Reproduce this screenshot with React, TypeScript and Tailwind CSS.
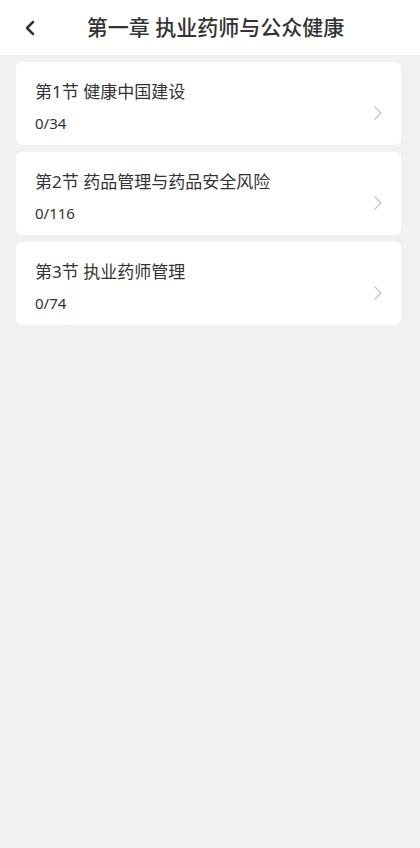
import React from 'react';
import { ChevronLeft, ChevronRight } from 'lucide-react';

const sections = [
  { id: 1, title: '第1节 健康中国建设', done: 0, total: 34 },
  { id: 2, title: '第2节 药品管理与药品安全风险', done: 0, total: 116 },
  { id: 3, title: '第3节 执业药师管理', done: 0, total: 74 },
];

export default function App() {
  return (
    <div
      className="min-h-screen bg-[#f1f1f1]"
      style={{ fontFamily: '"Noto Sans", "Noto Sans CJK SC", sans-serif' }}
    >
      <div className="relative flex h-[55px] items-center justify-center bg-white pl-[11px]">
        <ChevronLeft className="absolute left-[18px] h-6 w-6 text-[#333]" strokeWidth={2.5} />
        <h1 className="text-[21px] font-medium text-[#333]">第一章 执业药师与公众健康</h1>
      </div>

      <div className="flex flex-col gap-[7px] pl-4 pr-[19px] pt-[7px]">
        {sections.map((s) => (
          <div key={s.id} className="flex h-[83px] items-center rounded-md bg-white pl-[19px] pr-[11px]">
            <div className="flex-1 pt-[7px]">
              <p className="text-[17px] leading-[22px] text-[#333]">{s.title}</p>
              <p className="mt-[10px] text-[15px] leading-[20px] text-[#333]">
                {s.done}/{s.total}
              </p>
            </div>
            <ChevronRight className="mt-[19px] h-6 w-6 text-[#c4c4c4]" strokeWidth={1.3} />
          </div>
        ))}
      </div>
    </div>
  );
}
